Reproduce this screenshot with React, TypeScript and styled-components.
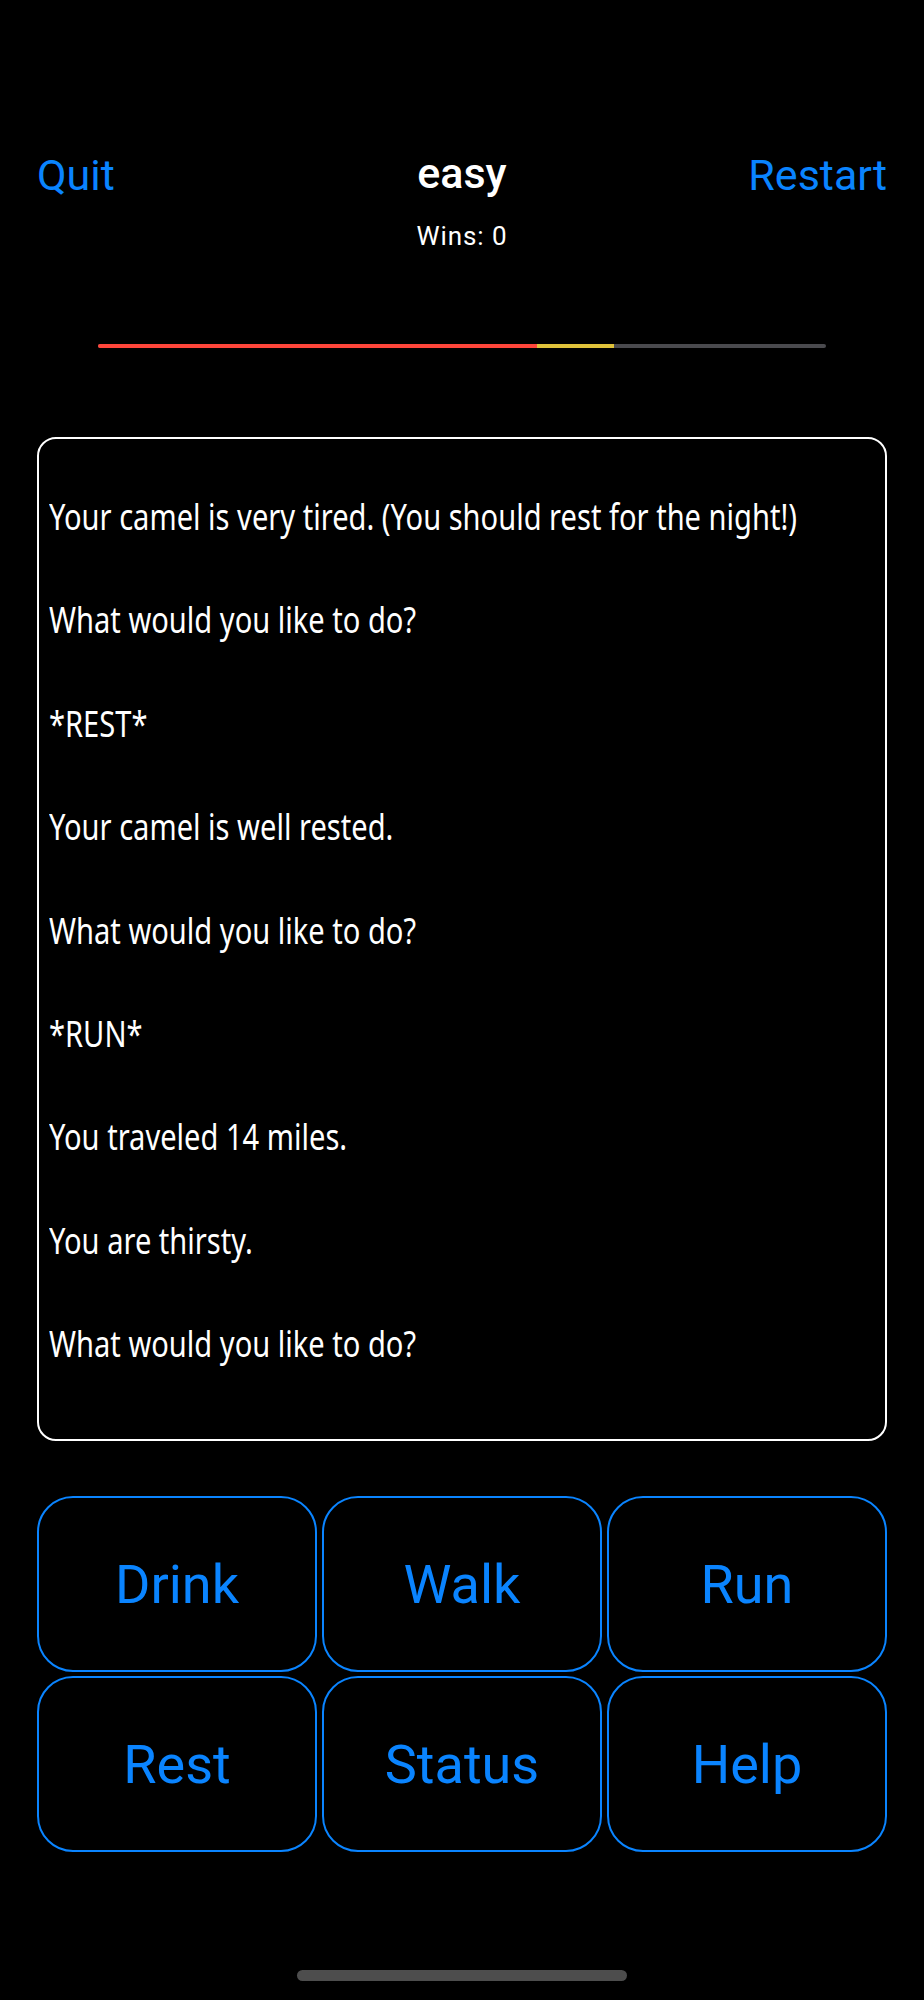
import React from "react";
import styled, { createGlobalStyle } from "styled-components";

const GlobalStyle = createGlobalStyle`
  html, body {
    margin: 0;
    padding: 0;
    background: #000;
  }
  * {
    box-sizing: border-box;
  }
`;

const Screen = styled.div`
  width: 924px;
  height: 2000px;
  background: #000;
  padding: 150px 37px 0;
  display: flex;
  flex-direction: column;
  font-family: Roboto, "Liberation Sans", sans-serif;
  overflow: hidden;
`;

const Header = styled.header`
  display: grid;
  grid-template-columns: 1fr auto 1fr;
  align-items: start;
`;

const NavButton = styled.button<{ $align: "left" | "right" }>`
  background: none;
  border: none;
  padding: 0;
  font-family: inherit;
  font-size: 43px;
  line-height: 50px;
  color: #0a84ff;
  text-align: ${(p) => p.$align};
  justify-self: ${(p) => (p.$align === "left" ? "start" : "end")};
  cursor: pointer;
`;

const TitleBlock = styled.div`
  display: flex;
  flex-direction: column;
  align-items: center;
`;

const Title = styled.h1`
  margin: -2px 0 0;
  font-size: 43px;
  line-height: 50px;
  font-weight: 500;
  color: #fff;
`;

const Wins = styled.div`
  margin-top: 23px;
  font-size: 26px;
  line-height: 30px;
  letter-spacing: 0.9px;
  color: #fff;
`;

const Track = styled.div`
  margin: 93px 61px 0;
  height: 4px;
  border-radius: 2px;
  background: #4a4a4e;
  display: flex;
  overflow: hidden;
`;

const Segment = styled.div<{ $color: string }>`
  height: 100%;
  background: ${(p) => p.$color};
`;

const Log = styled.div`
  margin-top: 89px;
  height: 1004px;
  border: 2px solid #fff;
  border-radius: 19px;
  padding: 52px 10px 0;
  overflow: hidden;
  font-family: "Noto Sans", "Open Sans", sans-serif;
  font-size: 36px;
  line-height: 51.7px;
  color: #fff;
`;

// the log font is a condensed face; squeeze the humanist sans to its width
const Message = styled.p`
  margin: 0 0 51.7px;
  white-space: nowrap;
  transform: scaleX(0.808);
  transform-origin: left center;
`;

const Controls = styled.div`
  margin-top: 55px;
  display: grid;
  grid-template-columns: repeat(3, 1fr);
  grid-auto-rows: 176px;
  column-gap: 5px;
  row-gap: 4px;
`;

const Action = styled.button`
  background: #000;
  border: 2px solid #0a84ff;
  border-radius: 36px;
  font-family: Roboto, "Liberation Sans", sans-serif;
  font-size: 54px;
  color: #0a84ff;
  display: flex;
  align-items: center;
  justify-content: center;
  padding: 0;
  cursor: pointer;
`;

const HomeBar = styled.div`
  margin: 118px auto 0;
  width: 330px;
  height: 11px;
  border-radius: 6px;
  background: #4d4d4d;
`;

const messages = [
  "Your camel is very tired. (You should rest for the night!)",
  "What would you like to do?",
  "*REST*",
  "Your camel is well rested.",
  "What would you like to do?",
  "*RUN*",
  "You traveled 14 miles.",
  "You are thirsty.",
  "What would you like to do?",
];

const actions = ["Drink", "Walk", "Run", "Rest", "Status", "Help"];

// share of the trip: travelled / natives / left
const progress = [
  { color: "#ff453a", width: 60.3 },
  { color: "#dfc23a", width: 10.6 },
];

const App: React.FC = () => {
  return (
    <>
      <GlobalStyle />
      <Screen>
        <Header>
          <NavButton $align="left">Quit</NavButton>
          <TitleBlock>
            <Title>easy</Title>
            <Wins>Wins: 0</Wins>
          </TitleBlock>
          <NavButton $align="right">Restart</NavButton>
        </Header>

        <Track>
          {progress.map((seg) => (
            <Segment
              key={seg.color}
              $color={seg.color}
              style={{ width: `${seg.width}%` }}
            />
          ))}
        </Track>

        <Log>
          {messages.map((m, i) => (
            <Message key={i}>{m}</Message>
          ))}
        </Log>

        <Controls>
          {actions.map((a) => (
            <Action key={a}>{a}</Action>
          ))}
        </Controls>

        <HomeBar />
      </Screen>
    </>
  );
};

export default App;
